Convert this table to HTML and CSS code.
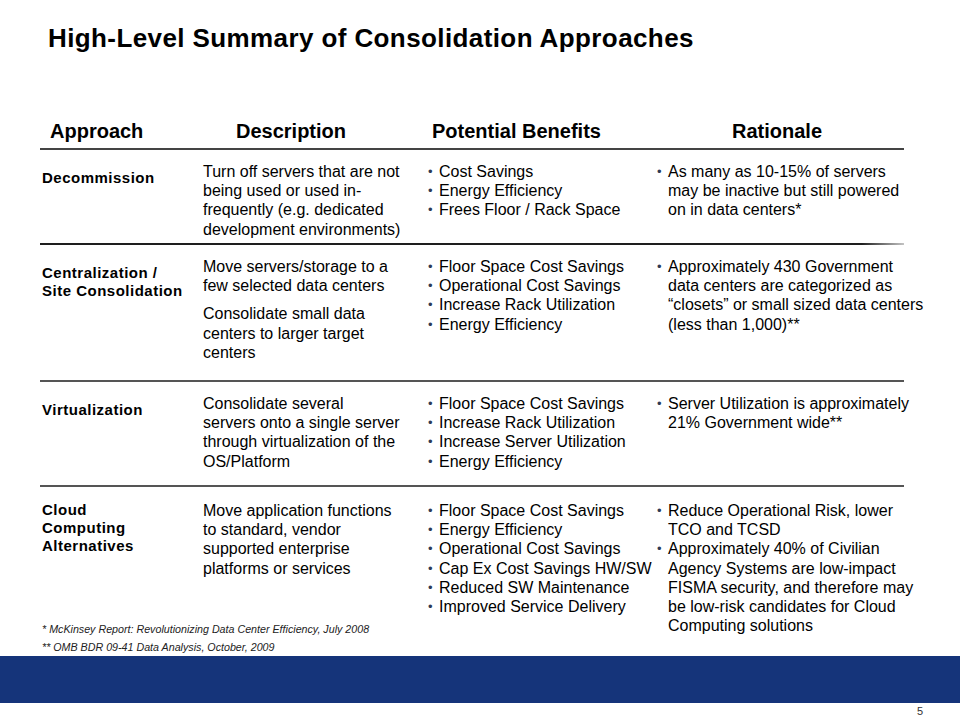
FILE: index.html
```html
<!DOCTYPE html>
<html lang="en">
<head>
<meta charset="utf-8">
<title>High-Level Summary of Consolidation Approaches</title>
<link rel="stylesheet" href="styles.css">
</head>
<body>
<div class="slide">
  <h1 class="title">High-Level Summary of Consolidation Approaches</h1>

  <div class="table">
    <div class="head">
      <div class="hcell hcell--approach">Approach</div>
      <div class="hcell hcell--desc">Description</div>
      <div class="hcell hcell--benefits">Potential Benefits</div>
      <div class="hcell hcell--rationale">Rationale</div>
    </div>

    <div class="row row--1">
      <div class="approach">Decommission</div>
      <div class="desc"><p>Turn off servers that are not<br>being used or used in-<br>frequently (e.g. dedicated<br>development environments)</p></div>
      <ul class="bullets">
        <li>Cost Savings</li>
        <li>Energy Efficiency</li>
        <li>Frees Floor / Rack Space</li>
      </ul>
      <ul class="bullets bullets--rationale">
        <li>As many as 10-15% of servers<br>may be inactive but still powered<br>on in data centers*</li>
      </ul>
    </div>

    <div class="row row--2">
      <div class="approach">Centralization /<br>Site Consolidation</div>
      <div class="desc">
        <p>Move servers/storage to a<br>few selected data centers</p>
        <p>Consolidate small data<br>centers to larger target<br>centers</p>
      </div>
      <ul class="bullets">
        <li>Floor Space Cost Savings</li>
        <li>Operational Cost Savings</li>
        <li>Increase Rack Utilization</li>
        <li>Energy Efficiency</li>
      </ul>
      <ul class="bullets bullets--rationale">
        <li>Approximately 430 Government<br>data centers are categorized as<br>“closets” or small sized data centers<br>(less than 1,000)**</li>
      </ul>
    </div>

    <div class="row row--3">
      <div class="approach">Virtualization</div>
      <div class="desc"><p>Consolidate several<br>servers onto a single server<br>through virtualization of the<br>OS/Platform</p></div>
      <ul class="bullets">
        <li>Floor Space Cost Savings</li>
        <li>Increase Rack Utilization</li>
        <li>Increase Server Utilization</li>
        <li>Energy Efficiency</li>
      </ul>
      <ul class="bullets bullets--rationale">
        <li>Server Utilization is approximately<br>21% Government wide**</li>
      </ul>
    </div>

    <div class="row row--4">
      <div class="approach approach--top">Cloud<br>Computing<br>Alternatives</div>
      <div class="desc"><p>Move application functions<br>to standard, vendor<br>supported enterprise<br>platforms or services</p></div>
      <ul class="bullets">
        <li>Floor Space Cost Savings</li>
        <li>Energy Efficiency</li>
        <li>Operational Cost Savings</li>
        <li>Cap Ex Cost Savings HW/SW</li>
        <li>Reduced SW Maintenance</li>
        <li>Improved Service Delivery</li>
      </ul>
      <ul class="bullets bullets--rationale">
        <li>Reduce Operational Risk, lower<br>TCO and TCSD</li>
        <li>Approximately 40% of Civilian<br>Agency Systems are low-impact<br>FISMA security, and therefore may<br>be low-risk candidates for Cloud<br>Computing solutions</li>
      </ul>
    </div>
  </div>

  <div class="notes">
    <p>* McKinsey Report: Revolutionizing Data Center Efficiency, July 2008</p>
    <p>** OMB BDR 09-41 Data Analysis, October, 2009</p>
  </div>

  <div class="band"></div>
  <div class="pagenum">5</div>
</div>
</body>
</html>
```

FILE: styles.css
```css
html, body {
  margin: 0;
  padding: 0;
  background: #ffffff;
  overflow: hidden;
}

.slide {
  width: 960px;
  height: 720px;
  font-family: "Liberation Sans", Arial, sans-serif;
  color: #000;
  display: flex;
  flex-direction: column;
}

.title {
  margin: 0;
  padding: 23px 0 0 48px;
  font-size: 26px;
  line-height: 30px;
  font-weight: bold;
  letter-spacing: 0.4px;
}

.table {
  margin: 66px 56px 0 40px;
  display: flex;
  flex-direction: column;
}

.head {
  display: grid;
  grid-template-columns: 161px 224px 229px 250px;
  padding-bottom: 5px;
}

.hcell {
  font-size: 20px;
  line-height: 24px;
  font-weight: bold;
  white-space: nowrap;
}

.hcell--approach { padding-left: 10px; }
.hcell--desc { padding-left: 35px; }
.hcell--benefits { padding-left: 7px; }
.hcell--rationale { padding-left: 78px; }

.row {
  display: grid;
  grid-template-columns: 161px 224px 229px 250px;
  align-items: start;
  border-top: 2px solid #3a3a3a;
  padding-top: 12px;
  box-sizing: border-box;
  font-size: 16px;
  line-height: 19.2px;
}

.row--1 { height: 95px; border-top-color: #444; }
.row--2 {
  height: 137px;
  border-top-color: #1e1e1e;
  border-image: linear-gradient(to right, #1e1e1e 0, #1e1e1e 95%, #c8c8c8 100%) 1;
}
.row--3 { height: 105px; border-top-color: #555; }
.row--4 { height: 135px; border-top-color: #555; padding-top: 14px; }

.approach {
  padding: 7px 0 0 2px;
  font-size: 15px;
  line-height: 18px;
  font-weight: bold;
  letter-spacing: 0.5px;
  white-space: nowrap;
}

.approach--top { padding-top: 0; }

.desc {
  padding-left: 2px;
  white-space: nowrap;
}

.desc p {
  margin: 0;
}

.desc p + p {
  margin-top: 9px;
}

.bullets {
  list-style: none;
  margin: 0;
  padding: 0 0 0 3px;
  white-space: nowrap;
}

.bullets--rationale {
  padding-left: 3px;
}

.bullets li {
  display: flex;
}

.bullets li::before {
  content: "•";
  flex: 0 0 11px;
  color: #2e3a55;
  font-size: 13px;
}

.notes {
  padding-left: 42px;
  font-size: 10.7px;
  line-height: 18px;
  font-style: italic;
  color: #222;
}

.notes p {
  margin: 0;
}

.band {
  height: 47px;
  background: #15347a;
}

.pagenum {
  text-align: right;
  padding-right: 37px;
  font-size: 11px;
  line-height: 16px;
  color: #333;
}
```
